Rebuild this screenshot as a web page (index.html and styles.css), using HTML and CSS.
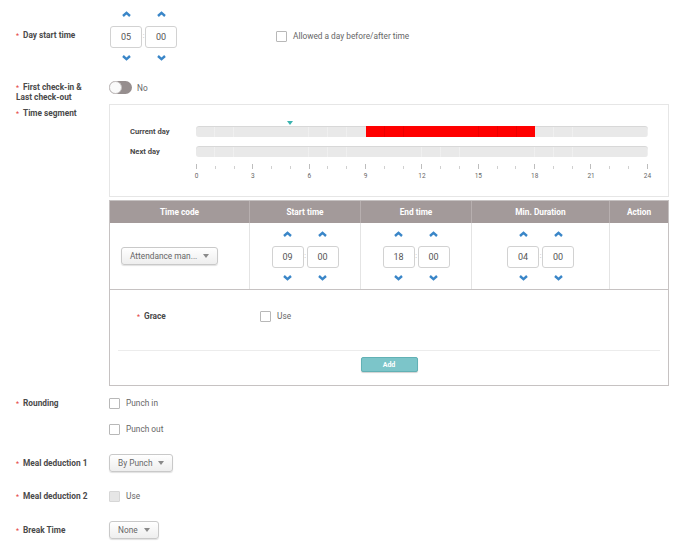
FILE: index.html
```html
<!DOCTYPE html>
<html>
<head>
<meta charset="utf-8">
<link rel="stylesheet" href="styles.css">
</head>
<body>
<div class="page">

  <div class="row row-day">
    <div class="label mid"><span class="req">*</span>Day start time</div>
    <div class="day-ctrl">
      <div class="time">
        <div class="unit">
          <span class="arrow up"><svg width="9" height="6" viewBox="0 0 9 6"><polyline points="1,5 4.5,1.8 8,5"/></svg></span>
          <span class="box">05</span>
          <span class="arrow down"><svg width="9" height="6" viewBox="0 0 9 6"><polyline points="1,1 4.5,4.2 8,1"/></svg></span>
        </div>
        <span class="colon">:</span>
        <div class="unit">
          <span class="arrow up"><svg width="9" height="6" viewBox="0 0 9 6"><polyline points="1,5 4.5,1.8 8,5"/></svg></span>
          <span class="box">00</span>
          <span class="arrow down"><svg width="9" height="6" viewBox="0 0 9 6"><polyline points="1,1 4.5,4.2 8,1"/></svg></span>
        </div>
      </div>
      <span class="check allowed"><span class="cb"></span>Allowed a day before/after time</span>
    </div>
  </div>

  <div class="row row-first">
    <div class="label two"><span class="req">*</span>First check-in &amp;<br>Last check-out</div>
    <div class="toggle-wrap">
      <span class="toggle"><span class="knob"></span></span>
      <span class="toggle-text">No</span>
    </div>
  </div>

  <div class="row row-seg">
    <div class="label seg"><span class="req">*</span>Time segment</div>
    <div class="seg-body">
      <div class="chart">
        <div class="crow">
          <span class="clabel">Current day</span>
          <div class="bar">
            <span class="fill" style="left:37.5%;width:37.5%"></span>
            <span class="marker" style="left:20.833%"></span>
          </div>
        </div>
        <div class="crow">
          <span class="clabel">Next day</span>
          <div class="bar"></div>
        </div>
        <div class="ticks">
          <i class="major"></i><i></i><i></i><i class="major"></i><i></i><i></i><i class="major"></i><i></i><i></i><i class="major"></i><i></i><i></i><i class="major"></i><i></i><i></i><i class="major"></i><i></i><i></i><i class="major"></i><i></i><i></i><i class="major"></i><i></i><i></i><i class="major"></i>
        </div>
        <div class="nums">
          <span>0</span><span>3</span><span>6</span><span>9</span><span>12</span><span>15</span><span>18</span><span>21</span><span>24</span>
        </div>
      </div>

      <div class="tbl">
        <div class="thead">
          <div class="th">Time code</div>
          <div class="th">Start time</div>
          <div class="th">End time</div>
          <div class="th">Min. Duration</div>
          <div class="th">Action</div>
        </div>
        <div class="tbody">
          <div class="td td-code"><span class="select wide">Attendance man...<i class="caret"></i></span></div>
          <div class="td">
            <div class="time">
              <div class="unit">
                <span class="arrow up"><svg width="9" height="6" viewBox="0 0 9 6"><polyline points="1,5 4.5,1.8 8,5"/></svg></span>
                <span class="box">09</span>
                <span class="arrow down"><svg width="9" height="6" viewBox="0 0 9 6"><polyline points="1,1 4.5,4.2 8,1"/></svg></span>
              </div>
              <span class="colon">:</span>
              <div class="unit">
                <span class="arrow up"><svg width="9" height="6" viewBox="0 0 9 6"><polyline points="1,5 4.5,1.8 8,5"/></svg></span>
                <span class="box">00</span>
                <span class="arrow down"><svg width="9" height="6" viewBox="0 0 9 6"><polyline points="1,1 4.5,4.2 8,1"/></svg></span>
              </div>
            </div>
          </div>
          <div class="td">
            <div class="time">
              <div class="unit">
                <span class="arrow up"><svg width="9" height="6" viewBox="0 0 9 6"><polyline points="1,5 4.5,1.8 8,5"/></svg></span>
                <span class="box">18</span>
                <span class="arrow down"><svg width="9" height="6" viewBox="0 0 9 6"><polyline points="1,1 4.5,4.2 8,1"/></svg></span>
              </div>
              <span class="colon">:</span>
              <div class="unit">
                <span class="arrow up"><svg width="9" height="6" viewBox="0 0 9 6"><polyline points="1,5 4.5,1.8 8,5"/></svg></span>
                <span class="box">00</span>
                <span class="arrow down"><svg width="9" height="6" viewBox="0 0 9 6"><polyline points="1,1 4.5,4.2 8,1"/></svg></span>
              </div>
            </div>
          </div>
          <div class="td">
            <div class="time">
              <div class="unit">
                <span class="arrow up"><svg width="9" height="6" viewBox="0 0 9 6"><polyline points="1,5 4.5,1.8 8,5"/></svg></span>
                <span class="box">04</span>
                <span class="arrow down"><svg width="9" height="6" viewBox="0 0 9 6"><polyline points="1,1 4.5,4.2 8,1"/></svg></span>
              </div>
              <span class="colon">:</span>
              <div class="unit">
                <span class="arrow up"><svg width="9" height="6" viewBox="0 0 9 6"><polyline points="1,5 4.5,1.8 8,5"/></svg></span>
                <span class="box">00</span>
                <span class="arrow down"><svg width="9" height="6" viewBox="0 0 9 6"><polyline points="1,1 4.5,4.2 8,1"/></svg></span>
              </div>
            </div>
          </div>
          <div class="td td-last"></div>
        </div>
        <div class="grace">
          <div class="grace-row">
            <div class="label line11"><span class="req">*</span>Grace</div>
            <div class="ctrl"><span class="check"><span class="cb"></span>Use</span></div>
          </div>
          <div class="divider"></div>
          <div class="btn-wrap"><span class="btn">Add</span></div>
        </div>
      </div>
    </div>
  </div>

  <div class="row row-round">
    <div class="label line11"><span class="req">*</span>Rounding</div>
    <div class="stack">
      <span class="check"><span class="cb"></span>Punch in</span>
      <span class="check"><span class="cb"></span>Punch out</span>
    </div>
  </div>

  <div class="row row-gap">
    <div class="label line18"><span class="req">*</span>Meal deduction 1</div>
    <div class="ctrl"><span class="select">By Punch<i class="caret"></i></span></div>
  </div>

  <div class="row row-gap">
    <div class="label line11"><span class="req">*</span>Meal deduction 2</div>
    <div class="ctrl"><span class="check"><span class="cb disabled"></span>Use</span></div>
  </div>

  <div class="row row-gap">
    <div class="label line18"><span class="req">*</span>Break Time</div>
    <div class="ctrl"><span class="select">None<i class="caret"></i></span></div>
  </div>

</div>
</body>
</html>
```

FILE: styles.css
```css
* { box-sizing: border-box; }
body {
  margin: 0;
  background: #fff;
  font-family: Roboto, "Liberation Sans", sans-serif;
  font-size: 8.3px;
  color: #5a5a5a;
}
.page { padding: 5px 17px 20px 0; }

.row {
  display: grid;
  grid-template-columns: 109px 1fr;
  align-items: start;
}
.ctrl { display: flex; align-items: flex-start; }
.label {
  padding-left: 16px;
  font-weight: 700;
  color: #4a4a4a;
  font-size: 8.3px;
  line-height: 9px;
  white-space: nowrap;
}
.req {
  display: inline-block;
  width: 7px;
  color: #e5413a;
  font-size: 7px;
  font-weight: 400;
}
.label.mid { align-self: center; }
.label.two { padding-top: 1.5px; }
.label.seg { padding-top: 4.5px; }
.label.line11 { line-height: 11px; height: 11px; }
.label.line18 { line-height: 18px; height: 18px; }

/* time spinner */
.time { display: flex; align-items: center; }
.unit { display: flex; flex-direction: column; align-items: center; width: 32px; }
.arrow {
  height: 18px; width: 32px;
  display: flex; align-items: center; justify-content: center;
}
.arrow svg polyline { fill: none; stroke: #3a86c8; stroke-width: 2.4; stroke-linecap: butt; stroke-linejoin: miter; }
.arrow.up { margin-bottom: 3px; }
.arrow.down { margin-top: 1px; }
.box {
  width: 32px; height: 22px;
  border: 1px solid #d2d2d2;
  border-radius: 3px;
  display: flex; align-items: center; justify-content: center;
  font-size: 9px; color: #555;
  background: #fff;
}
.colon { width: 3px; text-align: center; color: #b0b0b0; font-size: 7px; line-height: 7px; }

.row-day { height: 62px; }
.day-ctrl { display: flex; align-items: center; padding-left: 1px; }
.allowed { margin-left: 99px; }

/* checkbox */
.check { display: inline-flex; align-items: center; gap: 6px; color: #666; font-size: 8.3px; line-height: 11px; height: 11px; }
.cb {
  width: 11px; height: 11px;
  border: 1px solid #b8b8b8;
  border-radius: 1px;
  background: #fff;
}
.cb.disabled { background: #e6e6e6; border-color: #d6d6d6; }

/* toggle */
.row-first { margin-top: 14px; height: 23px; }
.toggle-wrap { display: flex; align-items: center; gap: 5px; height: 13px; }
.toggle {
  width: 23px; height: 13px;
  border-radius: 7px;
  background: #968e8e;
  display: flex; align-items: center;
}
.knob {
  width: 13px; height: 13px;
  border-radius: 50%;
  background: #fafafa;
  border: 1px solid #c8c4c4;
}
.toggle-text { color: #666; font-size: 8.3px; }

/* chart */
.chart {
  height: 93px;
  border: 1px solid #e6e6e6;
  padding: 21px 20px 0 20px;
}
.crow {
  display: grid;
  grid-template-columns: 66px 1fr;
  align-items: center;
  height: 11px;
}
.crow + .crow { margin-top: 9px; }
.clabel { font-weight: 700; color: #4a4a4a; font-size: 7.6px; }
.bar {
  position: relative;
  height: 11px;
  border-radius: 3px;
  background-color: #e9e9e9;
  background-image: repeating-linear-gradient(to right, transparent 0, transparent 18.33px, rgba(255,255,255,0.3) 18.33px, rgba(255,255,255,0.3) 18.833px);
  box-shadow: inset 0 1px 0 #d8d8d8;
}
.fill {
  position: absolute;
  top: 0; bottom: 0;
  background-color: #ff0000;
  background-image: repeating-linear-gradient(to right, transparent 0, transparent 18.33px, rgba(150,0,0,0.18) 18.33px, rgba(150,0,0,0.18) 18.833px);
}
.marker {
  position: absolute;
  top: -5px;
  margin-left: -3px;
  width: 0; height: 0;
  border-left: 3px solid transparent;
  border-right: 3px solid transparent;
  border-top: 4px solid #3bb3b0;
}
.ticks {
  margin: 7px 0 0 66px;
  height: 5px;
  display: flex;
  justify-content: space-between;
  align-items: flex-end;
}
.ticks i { display: block; width: 1px; height: 3px; background: #d0d0d0; }
.ticks i.major { height: 5px; background: #bdbdbd; }
.nums {
  margin: 3px 0 0 66px;
  height: 8px;
  display: flex;
  justify-content: space-between;
}
.nums span {
  width: 1px;
  display: flex; justify-content: center;
  white-space: nowrap;
  font-size: 6.5px; line-height: 8px; color: #666;
}

/* table */
.tbl { margin-top: 3px; border: 1px solid #c6c2c2; }
.thead, .tbody {
  display: grid;
  grid-template-columns: 140px 111px 111px 138px 1fr;
}
.thead { height: 22px; background: #a39a9a; }
.th {
  display: flex; align-items: center; justify-content: center;
  color: #fff; font-weight: 700; font-size: 8.3px;
  border-right: 1px solid #b7afaf;
}
.th:last-child { border-right: none; }
.tbody { height: 67px; border-bottom: 1px solid #c6c2c2; }
.td {
  display: flex; align-items: center; justify-content: center;
  border-right: 1px solid #e4e4e4;
}
.td-last { border-right: none; }
.td-code { justify-content: flex-start; padding-left: 11px; }

.select {
  display: inline-flex; align-items: center; gap: 6px;
  height: 18px;
  padding: 0 8px;
  border: 1px solid #c9c9c9;
  border-radius: 3px;
  background: linear-gradient(#ffffff, #eeeeee);
  box-shadow: 0 1px 1px rgba(0,0,0,0.12);
  color: #666; font-size: 8.3px;
  white-space: nowrap;
}
.select.wide { width: 97px; }
.caret {
  display: inline-block; width: 0; height: 0;
  border-left: 3px solid transparent;
  border-right: 3px solid transparent;
  border-top: 4px solid #8a8a8a;
}

.grace { padding: 21px 8px 13px; }
.grace-row {
  display: grid;
  grid-template-columns: 123px 1fr;
  padding-left: 19px;
  height: 11px;
}
.grace-row .label { padding-left: 0; }
.divider { margin-top: 28px; height: 1px; background: #ececec; }
.btn-wrap { display: flex; justify-content: center; margin-top: 6px; }
.btn {
  width: 57px; height: 15px;
  display: flex; align-items: center; justify-content: center;
  background: #7cc5c9;
  border: 1px solid #62b1b5;
  border-radius: 2px;
  box-shadow: 0 1px 1px rgba(0,0,0,0.18);
  color: #fff; font-weight: 700; font-size: 7px;
}

/* bottom rows */
.row-round { margin-top: 12px; }
.stack { display: flex; flex-direction: column; align-items: flex-start; gap: 15px; }
.row-gap { margin-top: 19px; }
```
